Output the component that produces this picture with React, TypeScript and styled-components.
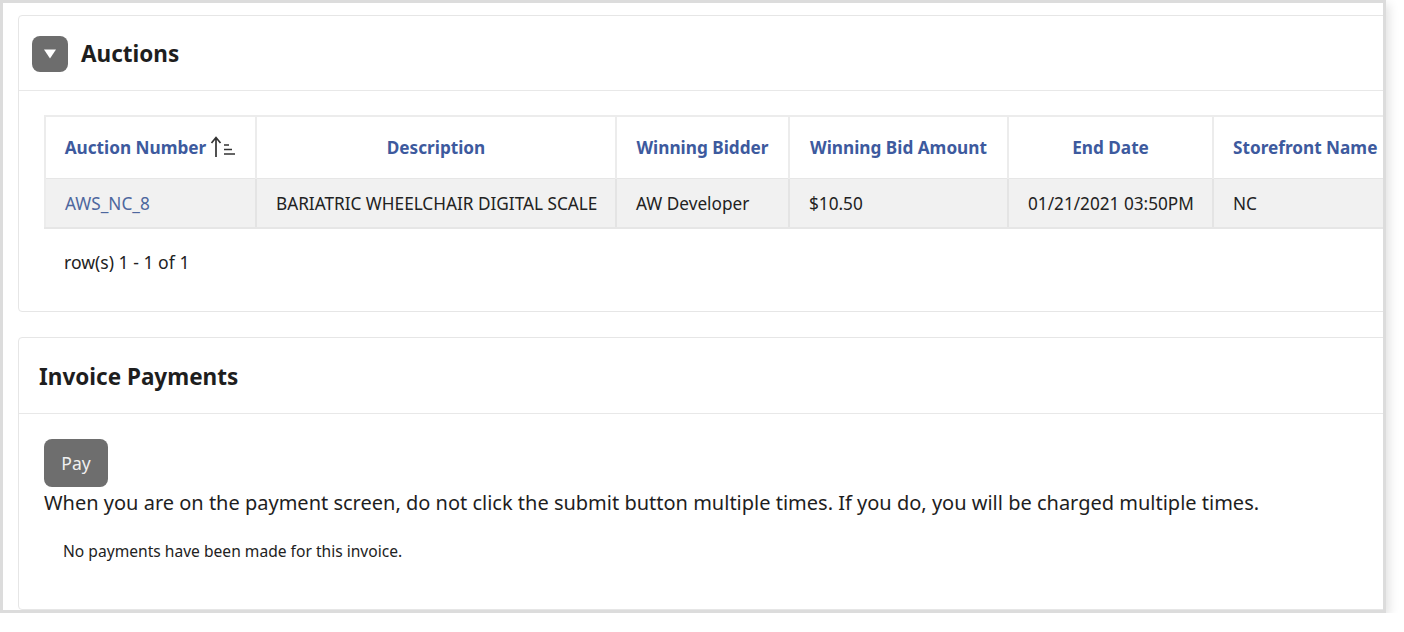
import React from "react";
import styled, { createGlobalStyle } from "styled-components";

const Global = createGlobalStyle`
  html, body { margin: 0; padding: 0; background: #ffffff; }
  body { font-family: "Noto Sans", "Open Sans", sans-serif; color: #222; }
`;

const Frame = styled.div`
  box-sizing: border-box;
  width: 1386px;
  height: 613px;
  border: 3px solid #dcdcdc;
  box-shadow: 3px 4px 10px rgba(0, 0, 0, 0.12);
  background: #fff;
  overflow: hidden;
  padding: 12px 0 0 15px;
  display: flex;
  flex-direction: column;
  gap: 25px;
`;

const Panel = styled.section<{ $height: number }>`
  box-sizing: border-box;
  width: 1420px;
  height: ${(p) => p.$height}px;
  flex: none;
  border: 1px solid #e6e6e6;
  border-radius: 4px;
  background: #fff;
  display: flex;
  flex-direction: column;
`;

const PanelHeader = styled.header<{ $height: number; $pad: number }>`
  box-sizing: border-box;
  height: ${(p) => p.$height}px;
  padding-left: ${(p) => p.$pad}px;
  border-bottom: 1px solid #e8e8e8;
  display: flex;
  align-items: center;
  gap: 13px;
`;

const ToggleButton = styled.button`
  width: 36px;
  height: 36px;
  margin-top: 1px;
  border: none;
  border-radius: 8px;
  background: #6d6d6d;
  display: flex;
  align-items: center;
  justify-content: center;
  padding: 0;
`;

const Title = styled.h2`
  margin: 0;
  font-size: 22.5px;
  font-weight: 700;
  color: #1e1e1e;
  line-height: 1;
  padding-top: 3px;
`;

const PanelBody = styled.div<{ $pad: string }>`
  padding: ${(p) => p.$pad};
  display: flex;
  flex-direction: column;
`;

const Table = styled.table`
  border-collapse: collapse;
  table-layout: fixed;
  width: 1400px;
  font-size: 17.2px;
  border-top: 2px solid #ececec;
  border-left: 2px solid #ececec;
`;

const Th = styled.th`
  height: 61px;
  padding: 0 10px;
  text-align: center;
  color: #3d5a9e;
  font-weight: 700;
  white-space: nowrap;
  overflow: hidden;
  border-right: 2px solid #ececec;
  background: #fff;
`;

const Td = styled.td<{ $align?: string; $link?: boolean }>`
  height: 48px;
  padding: 0 19px;
  background: #f1f1f1;
  text-align: ${(p) => p.$align || "left"};
  color: ${(p) => (p.$link ? "#4d679e" : "#222")};
  white-space: nowrap;
  border-right: 2px solid #e4e4e4;
  border-top: 1px solid #e6e6e6;
  border-bottom: 2px solid #e6e6e6;
`;

const HeadLeft = styled(Th)`
  text-align: left;
  padding-left: 19px;
`;

const SortIcon = styled.svg`
  vertical-align: -4px;
  margin-left: 4px;
`;

const RowCount = styled.div`
  margin-top: 21px;
  padding-left: 20px;
  font-size: 17.6px;
  color: #222;
`;

const PayButton = styled.button`
  width: 64px;
  height: 48px;
  border: none;
  border-radius: 8px;
  background: #6e6e6e;
  color: #f0f0f0;
  font-family: "Noto Sans", "Open Sans", sans-serif;
  font-size: 17.5px;
  padding: 0;
`;

const Warning = styled.p`
  margin: 3px 0 0;
  font-size: 20px;
  line-height: 26px;
  color: #1e1e1e;
`;

const NoPayments = styled.p`
  margin: 24px 0 0 19px;
  font-size: 15.6px;
  color: #222;
`;

const columns = [
  { label: "Auction Number", w: 211, sort: true },
  { label: "Description", w: 360 },
  { label: "Winning Bidder", w: 173 },
  { label: "Winning Bid Amount", w: 219 },
  { label: "End Date", w: 205 },
  { label: "Storefront Name", w: 231, left: true },
];

export default function App() {
  return (
    <>
      <Global />
      <Frame>
        <Panel $height={297}>
          <PanelHeader $height={75} $pad={13}>
            <ToggleButton aria-label="collapse">
              <svg width="14" height="12" viewBox="0 0 14 12">
                <path d="M1 1.5 H13 L7 10.5 Z" fill="#fff" />
              </svg>
            </ToggleButton>
            <Title>Auctions</Title>
          </PanelHeader>
          <PanelBody $pad="24px 0 0 25px">
            <Table>
              <colgroup>
                {columns.map((c) => (
                  <col key={c.label} style={{ width: c.w }} />
                ))}
              </colgroup>
              <thead>
                <tr>
                  {columns.map((c) =>
                    c.left ? (
                      <HeadLeft key={c.label}>{c.label}</HeadLeft>
                    ) : (
                      <Th key={c.label}>
                        {c.label}
                        {c.sort && (
                          <SortIcon width="26" height="22" viewBox="0 0 26 22">
                            <path d="M6 21 V2 M1.5 7 L6 1.5 L10.5 7" stroke="#333" strokeWidth="1.7" fill="none" />
                            <path d="M14 9 H19 M14 13.5 H22 M14 18 H25" stroke="#333" strokeWidth="1.5" fill="none" />
                          </SortIcon>
                        )}
                      </Th>
                    )
                  )}
                </tr>
              </thead>
              <tbody>
                <tr>
                  <Td $link>AWS_NC_8</Td>
                  <Td>BARIATRIC WHEELCHAIR DIGITAL SCALE</Td>
                  <Td>AW Developer</Td>
                  <Td>$10.50</Td>
                  <Td $align="center">01/21/2021 03:50PM</Td>
                  <Td>NC</Td>
                </tr>
              </tbody>
            </Table>
            <RowCount>row(s) 1 - 1 of 1</RowCount>
          </PanelBody>
        </Panel>
        <Panel $height={273}>
          <PanelHeader $height={76} $pad={20}>
            <Title>Invoice Payments</Title>
          </PanelHeader>
          <PanelBody $pad="25px 0 0 25px">
            <div>
              <PayButton>Pay</PayButton>
            </div>
            <Warning>
              When you are on the payment screen, do not click the submit button multiple times. If you do, you will be charged multiple times.
            </Warning>
            <NoPayments>No payments have been made for this invoice.</NoPayments>
          </PanelBody>
        </Panel>
      </Frame>
    </>
  );
}
